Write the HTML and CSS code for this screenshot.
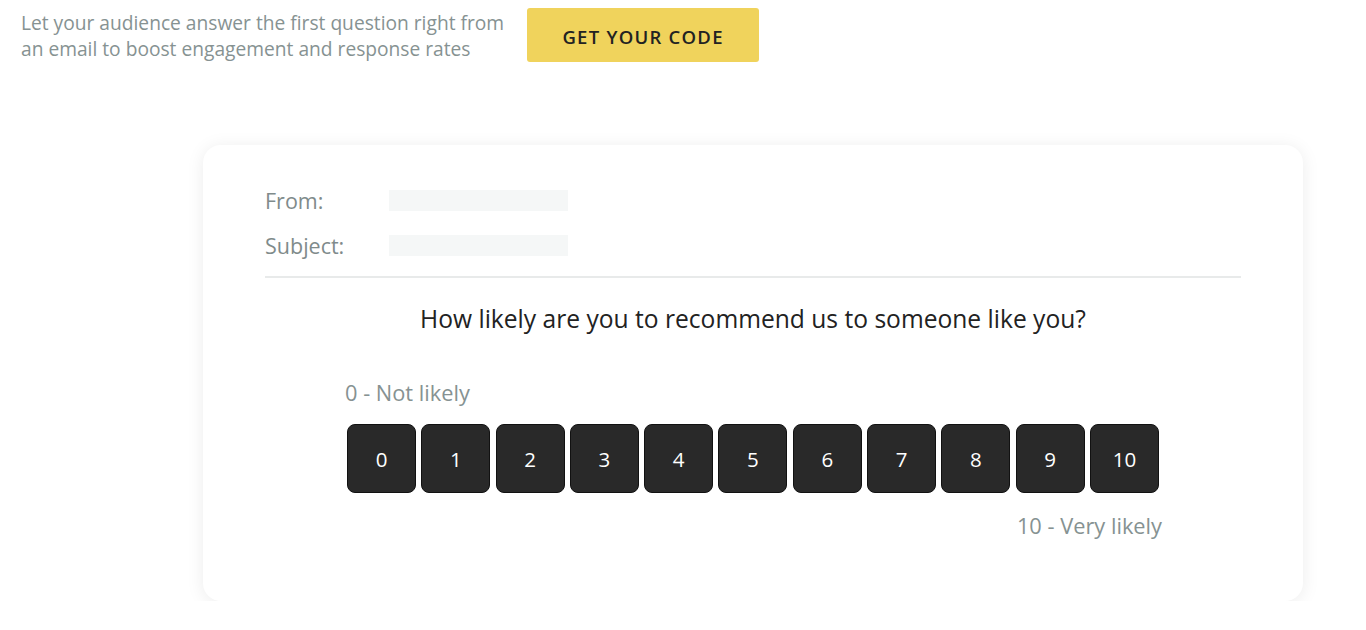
FILE: index.html
```html
<!DOCTYPE html>
<html>
<head>
<meta charset="utf-8">
<link rel="stylesheet" href="styles.css">
</head>
<body>
<div class="header">
  <p class="intro">Let your audience answer the first question right from<br>an email to boost engagement and response rates</p>
  <button class="cta">GET YOUR CODE</button>
</div>
<div class="card">
  <div class="meta">
    <div class="meta-row"><span class="meta-label">From:</span><span class="meta-box"></span></div>
    <div class="meta-row"><span class="meta-label">Subject:</span><span class="meta-box"></span></div>
  </div>
  <div class="divider"></div>
  <h2 class="question">How likely are you to recommend us to someone like you?</h2>
  <div class="scale">
    <div class="scale-low">0 - Not likely</div>
    <div class="scale-buttons">
      <span class="num">0</span><span class="num">1</span><span class="num">2</span><span class="num">3</span><span class="num">4</span><span class="num">5</span><span class="num">6</span><span class="num">7</span><span class="num">8</span><span class="num">9</span><span class="num">10</span>
    </div>
    <div class="scale-high">10 - Very likely</div>
  </div>
</div>
</body>
</html>
```
FILE: styles.css
```css
* { box-sizing: border-box; }
html, body { margin: 0; padding: 0; background: #ffffff; }
body { font-family: "Open Sans", "Liberation Sans", sans-serif; }

.header {
  display: flex;
  align-items: flex-start;
  gap: 23px;
  padding: 8px 0 0 21px;
}
.intro {
  margin: 2px 0 0 0;
  font-size: 19.2px;
  line-height: 26px;
  color: #869292;
  white-space: nowrap;
}
.cta {
  width: 232px;
  height: 54px;
  border: none;
  border-radius: 3px;
  background: #f0d35c;
  color: #222222;
  font-family: "Open Sans", "Liberation Sans", sans-serif;
  font-weight: 600;
  font-size: 18.5px;
  letter-spacing: 1.25px;
  padding: 3px 0 0 0;
}

.card {
  margin: 83px 0 0 203px;
  width: 1100px;
  height: 456px;
  background: #ffffff;
  border-radius: 18px;
  box-shadow: 0 2px 18px rgba(0, 0, 0, 0.08);
  padding: 44px 62px 0 62px;
}
.meta { display: flex; flex-direction: column; gap: 22px; }
.meta-row { display: flex; align-items: center; height: 23px; }
.meta-label {
  width: 124px;
  font-size: 21.5px;
  line-height: 23px;
  color: #7f8b8b;
}
.meta-box {
  width: 179px;
  height: 21px;
  background: #f5f7f7;
}
.divider {
  margin-top: 19px;
  height: 2px;
  background: #e8eaea;
}
.question {
  margin: 26px 0 0 0;
  text-align: center;
  font-weight: 400;
  font-size: 24.6px;
  line-height: 30px;
  color: #222222;
}
.scale {
  width: 812px;
  margin: 45px auto 0 auto;
  display: flex;
  flex-direction: column;
}
.scale-low, .scale-high {
  font-size: 21.8px;
  line-height: 28px;
  color: #869292;
}
.scale-low { margin-left: -2px; }
.scale-high { text-align: right; margin-top: 19px; margin-right: -3px; }
.scale-buttons {
  display: flex;
  gap: 5.3px;
  margin-top: 17px;
}
.num {
  width: 69px;
  height: 69px;
  border-radius: 8px;
  background: #292929;
  border: 1px solid #111111;
  color: #ffffff;
  font-size: 20.5px;
  display: flex;
  align-items: center;
  justify-content: center;
}
```
